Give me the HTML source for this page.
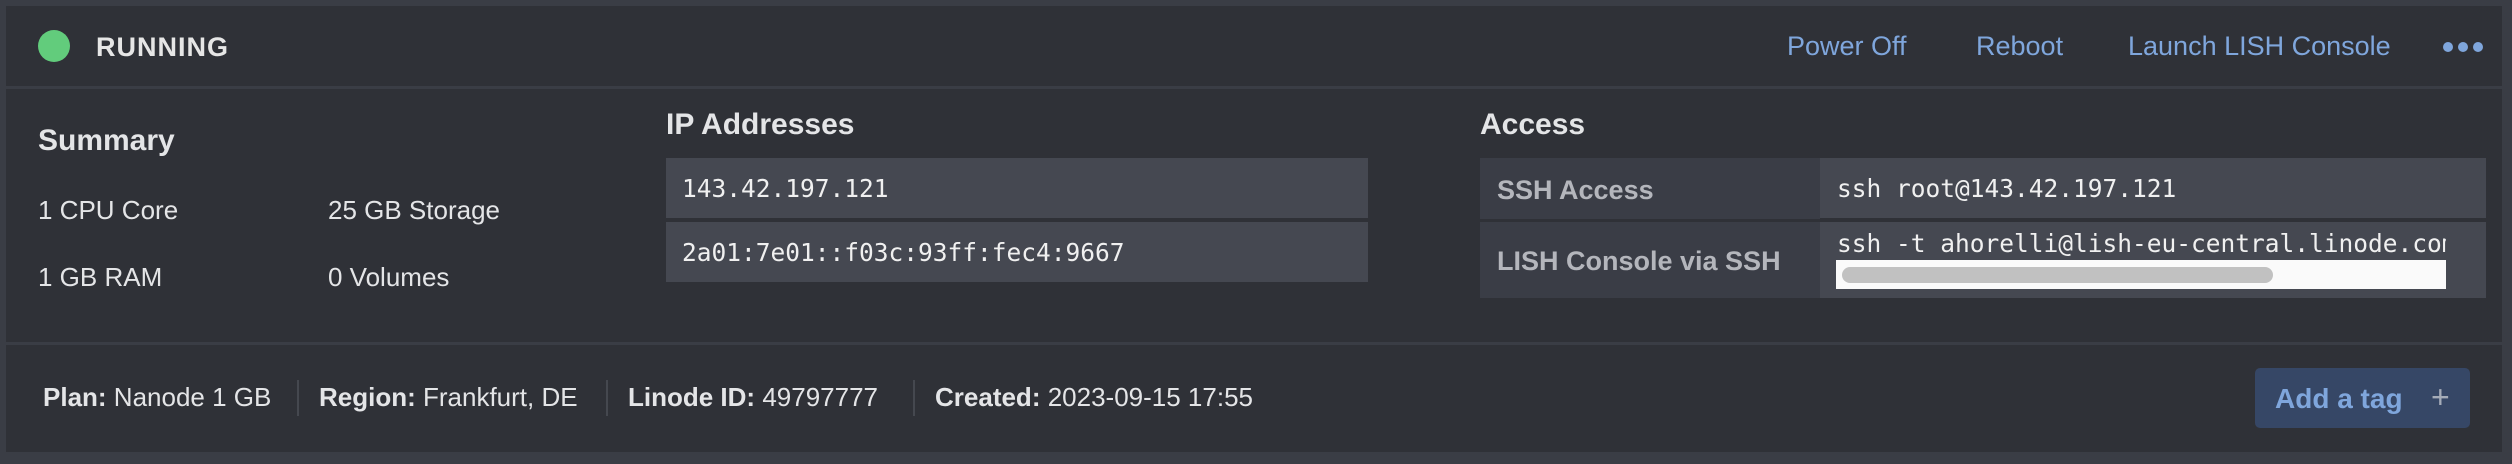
<!DOCTYPE html>
<html><head><meta charset="utf-8"><style>
*{margin:0;padding:0;box-sizing:border-box}
body{width:2512px;height:464px;background:#3a3d45;position:relative;overflow:hidden;font-family:"Liberation Sans",sans-serif;color:#e4e5e7}
.card{position:absolute;left:6px;top:6px;width:2496px;height:446px;background:#2f3137}
.a{position:absolute;white-space:nowrap}
.hr{position:absolute;left:6px;width:2496px;height:3px;background:#3a3d45}
.link{color:#7fa6dc;font-size:27px;top:31px}
.mono{font-family:"DejaVu Sans Mono","Liberation Mono",monospace;font-size:24.5px;color:#f0f0f0}
.box{position:absolute;background:#454851}
.lab{position:absolute;background:#3a3d46;color:#b4b6bc;font-weight:bold;font-size:27px}
.f{font-size:26px;top:382px;color:#e4e5e7}
.f b{font-weight:bold}
.sep{position:absolute;top:380px;width:2px;height:36px;background:#45484f}
</style></head><body>
<div class="card"></div>
<div class="a" style="left:38px;top:30px;width:32px;height:32px;border-radius:50%;background:#62cc7c"></div>
<div class="a" style="left:96px;top:32px;font-size:27px;font-weight:bold;letter-spacing:1px;color:#e6e6e6">RUNNING</div>
<div class="a link" style="left:1787px">Power Off</div>
<div class="a link" style="left:1976px">Reboot</div>
<div class="a link" style="left:2128px">Launch LISH Console</div>
<div class="a" style="left:2443px;top:42px;width:10px;height:10px;border-radius:50%;background:#7fa6dc"></div>
<div class="a" style="left:2458px;top:42px;width:10px;height:10px;border-radius:50%;background:#7fa6dc"></div>
<div class="a" style="left:2473px;top:42px;width:10px;height:10px;border-radius:50%;background:#7fa6dc"></div>
<div class="hr" style="top:86px"></div>

<div class="a" style="left:38px;top:124px;font-size:30px;font-weight:bold">Summary</div>
<div class="a" style="left:38px;top:195px;font-size:26px">1 CPU Core</div>
<div class="a" style="left:328px;top:195px;font-size:26px">25 GB Storage</div>
<div class="a" style="left:38px;top:262px;font-size:26px">1 GB RAM</div>
<div class="a" style="left:328px;top:262px;font-size:26px">0 Volumes</div>

<div class="a" style="left:666px;top:108px;font-size:30px;font-weight:bold">IP Addresses</div>
<div class="box" style="left:666px;top:158px;width:702px;height:60px"></div>
<div class="box" style="left:666px;top:222px;width:702px;height:60px"></div>
<div class="a mono" style="left:682px;top:174px">143.42.197.121</div>
<div class="a mono" style="left:682px;top:238px">2a01:7e01::f03c:93ff:fec4:9667</div>

<div class="a" style="left:1480px;top:108px;font-size:30px;font-weight:bold">Access</div>
<div class="lab" style="left:1480px;top:158px;width:340px;height:61px;padding:17px 0 0 17px">SSH Access</div>
<div class="lab" style="left:1480px;top:222px;width:340px;height:76px;padding:24px 0 0 17px">LISH Console via SSH</div>
<div class="box" style="left:1820px;top:158px;width:666px;height:60px"></div>
<div class="box" style="left:1820px;top:222px;width:666px;height:76px"></div>
<div class="a mono" style="left:1837px;top:174px">ssh root@143.42.197.121</div>
<div class="a mono" style="left:1837px;top:229px;width:609px;overflow:hidden">ssh -t ahorelli@lish-eu-central.linode.com</div>
<div class="a" style="left:1836px;top:260px;width:610px;height:29px;background:#fafafa"></div>
<div class="a" style="left:1842px;top:267px;width:431px;height:16px;border-radius:8px;background:#c1c1c1"></div>

<div class="hr" style="top:342px"></div>
<div class="a f" style="left:43px"><b>Plan:</b> Nanode 1 GB</div>
<div class="sep" style="left:297px"></div>
<div class="a f" style="left:319px"><b>Region:</b> Frankfurt, DE</div>
<div class="sep" style="left:606px"></div>
<div class="a f" style="left:628px"><b>Linode ID:</b> 49797777</div>
<div class="sep" style="left:913px"></div>
<div class="a f" style="left:935px"><b>Created:</b> 2023-09-15 17:55</div>
<div class="a" style="left:2255px;top:368px;width:215px;height:60px;border-radius:5px;background:#364766"></div>
<div class="a" style="left:2275px;top:383px;font-size:28px;font-weight:bold;color:#7fa6dc">Add a tag</div>
<div class="a" style="left:2431px;top:379px;font-size:32px;color:#a5acb8">+</div>
</body></html>
